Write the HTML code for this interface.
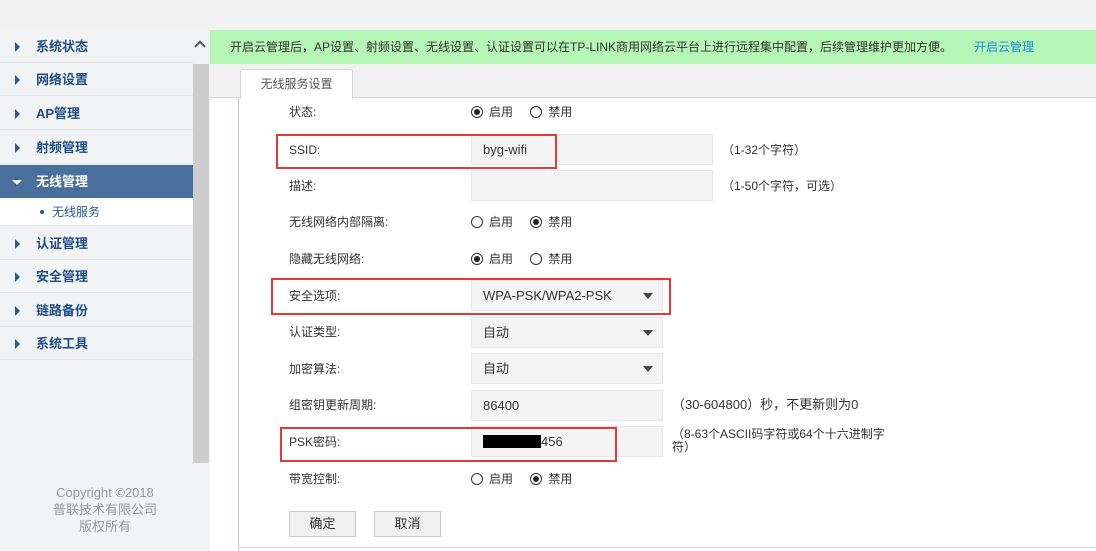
<!DOCTYPE html><html><head><meta charset="utf-8"><style>
*{margin:0;padding:0;box-sizing:border-box}
body{width:1096px;height:551px;overflow:hidden;background:#fff;font-family:"Liberation Sans","Noto Sans CJK SC",sans-serif;font-size:12px;color:#333;position:relative}
.a{position:absolute}
.nav{left:0;width:193px;height:33px;border-bottom:1px solid #e4e6ea;background:#f2f3f5;color:#1d4d86;font-weight:bold;font-size:13px;line-height:33px;padding-left:36px}
.nav:before{content:"";position:absolute;left:15px;top:12px;border-left:5px solid #2a5a94;border-top:5px solid transparent;border-bottom:5px solid transparent}
.lbl{left:289px;line-height:16px}
.in{left:471px;height:31px;background:#f4f4f4;border:1px solid #e6e6e6;line-height:29px;padding-left:11px;font-size:13px;color:#333}
.dd:after{content:"";position:absolute;right:9px;top:12px;border-top:6px solid #444;border-left:5px solid transparent;border-right:5px solid transparent}
.red{border:2px solid #e53935}
.r{display:inline-block;width:12px;height:12px;border:1px solid #333;border-radius:50%;vertical-align:-2px;margin-right:6px;position:relative}
.r.on:after{content:"";position:absolute;left:2px;top:2px;width:6px;height:6px;border-radius:50%;background:#222}
.rad{left:471px;line-height:16px}
.rt{line-height:16px}
.btn{height:26px;width:67px;border:1px solid #c8c8c8;background:#f0f0f0;text-align:center;line-height:24px;font-size:13px;top:511px}
</style></head><body>
<div class="a" style="left:0;top:0;width:1096px;height:30px;background:#f2f2f2"></div>
<div class="a" style="left:0;top:30px;width:193px;height:521px;background:#f2f3f5"></div>
<div class="a nav" style="top:30px">系统状态</div>
<div class="a nav" style="top:63px">网络设置</div>
<div class="a nav" style="top:97px">AP管理</div>
<div class="a nav" style="top:131px">射频管理</div>
<div class="a nav" style="top:165px;background:#4b6f9c;color:#fff;border:none"><span style="position:absolute;left:12px;top:15px;border-top:5px solid #fff;border-left:5px solid transparent;border-right:5px solid transparent;width:0;height:0"></span>无线管理</div>
<div class="a" style="left:0;top:198px;width:193px;height:28px;background:#fff;line-height:28px;padding-left:38px;color:#2a5a94;border-bottom:1px solid #e4e6ea"><span style="position:absolute;left:40px;top:12px;width:4px;height:4px;border-radius:50%;background:#2a5a94"></span><span style="margin-left:14px">无线服务</span></div>
<div class="a nav" style="top:227px">认证管理</div>
<div class="a nav" style="top:260px">安全管理</div>
<div class="a nav" style="top:294px">链路备份</div>
<div class="a nav" style="top:327px">系统工具</div>
<div class="a" style="left:0;top:484px;width:210px;text-align:center;color:#999;font-size:13px;line-height:17px">Copyright ©2018<br>普联技术有限公司<br>版权所有</div>
<div class="a" style="left:193px;top:30px;width:17px;height:521px;background:#f2f3f5"></div>
<div class="a" style="left:193px;top:64px;width:16px;height:399px;background:#cdcdcd"></div>
<div class="a" style="left:196px;top:42px;width:8px;height:8px;border-left:2px solid #555;border-top:2px solid #555;transform:rotate(45deg)"></div>
<div class="a" style="left:210px;top:30px;width:886px;height:34px;background:#b5f5b5;line-height:34px;padding-left:20px;color:#333">开启云管理后，AP设置、射频设置、无线设置、认证设置可以在TP-LINK商用网络云平台上进行远程集中配置，后续管理维护更加方便。<span style="color:#1e8be0;margin-left:22px">开启云管理</span></div>
<div class="a" style="left:210px;top:64px;width:886px;height:34px;background:#f2f2f2;border-bottom:1px solid #d6d6d6"></div>
<div class="a" style="left:240px;top:69px;width:113px;height:30px;background:#fff;border:1px solid #d6d6d6;border-bottom:none;border-radius:3px 3px 0 0;line-height:28px;text-align:center;color:#555">无线服务设置</div>
<div class="a" style="left:238px;top:98px;width:1px;height:453px;background:#bfc8d6"></div>
<div class="a" style="left:238px;top:547px;width:858px;height:1px;background:#ddd"></div>

<div class="a lbl" style="top:104px">状态:</div>
<div class="a rad" style="top:104px"><span class="r on"></span>启用 <span class="r" style="margin-left:14px"></span>禁用</div>

<div class="a in" style="top:134px;width:242px">byg-wifi</div>
<div class="a lbl" style="top:142px">SSID:</div>
<div class="a red" style="left:276px;top:134px;width:281px;height:35px"></div>
<div class="a rt" style="left:722px;top:142px">（1-32个字符）</div>

<div class="a lbl" style="top:178px">描述:</div>
<div class="a in" style="top:170px;width:242px"></div>
<div class="a rt" style="left:722px;top:178px">（1-50个字符，可选）</div>

<div class="a lbl" style="top:214px">无线网络内部隔离:</div>
<div class="a rad" style="top:214px"><span class="r"></span>启用 <span class="r on" style="margin-left:14px"></span>禁用</div>
<div class="a lbl" style="top:251px">隐藏无线网络:</div>
<div class="a rad" style="top:251px"><span class="r on"></span>启用 <span class="r" style="margin-left:14px"></span>禁用</div>

<div class="a lbl" style="top:288px">安全选项:</div>
<div class="a in dd" style="top:280px;width:192px">WPA-PSK/WPA2-PSK</div>
<div class="a red" style="left:271px;top:278px;width:400px;height:37px"></div>

<div class="a lbl" style="top:324px">认证类型:</div>
<div class="a in dd" style="top:317px;width:192px">自动</div>
<div class="a lbl" style="top:361px">加密算法:</div>
<div class="a in dd" style="top:353px;width:192px">自动</div>
<div class="a lbl" style="top:397px">组密钥更新周期:</div>
<div class="a in" style="top:390px;width:192px">86400</div>
<div class="a rt" style="left:672px;top:397px;font-size:13px">（30-604800）秒，不更新则为0</div>

<div class="a lbl" style="top:434px">PSK密码:</div>
<div class="a in" style="top:426px;width:192px"><span style="display:inline-block;width:58px;height:13px;background:#000;vertical-align:-2px"></span>456</div>
<div class="a red" style="left:280px;top:427px;width:337px;height:35px"></div>
<div class="a rt" style="left:672px;top:428px;font-size:12px;line-height:13px">（8-63个ASCII码字符或64个十六进制字<br>符）</div>

<div class="a lbl" style="top:471px">带宽控制:</div>
<div class="a rad" style="top:471px"><span class="r"></span>启用 <span class="r on" style="margin-left:14px"></span>禁用</div>

<div class="a btn" style="left:289px">确定</div>
<div class="a btn" style="left:374px">取消</div>
</body></html>
